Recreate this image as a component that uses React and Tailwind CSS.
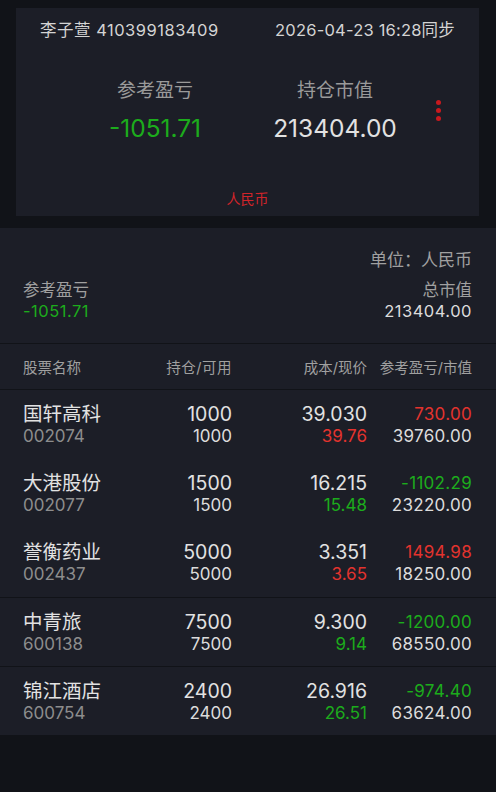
import React from 'react'

const rows = [
  { name: '国轩高科', code: '002074', hold: '1000', avail: '1000', cost: '39.030', price: '39.76', pnl: '730.00', value: '39760.00', up: true },
  { name: '大港股份', code: '002077', hold: '1500', avail: '1500', cost: '16.215', price: '15.48', pnl: '-1102.29', value: '23220.00', up: false },
  { name: '誉衡药业', code: '002437', hold: '5000', avail: '5000', cost: '3.351', price: '3.65', pnl: '1494.98', value: '18250.00', up: true },
  { name: '中青旅', code: '600138', hold: '7500', avail: '7500', cost: '9.300', price: '9.14', pnl: '-1200.00', value: '68550.00', up: false, line: true },
  { name: '锦江酒店', code: '600754', hold: '2400', avail: '2400', cost: '26.916', price: '26.51', pnl: '-974.40', value: '63624.00', up: false, line: true },
]

function Row({ r }) {
  const color = r.up ? 'text-[#e3332e]' : 'text-[#1cac1c]'
  return (
    <div className={`flex h-[69px] pt-3 pl-[23px] ${r.line ? 'border-t border-[#111318]' : ''}`}>
      <div className="w-[110px]">
        <div className="h-6 leading-6 text-[19.5px] text-[#e2e2e2]">{r.name}</div>
        <div className="h-5 leading-5 text-[17px] text-[#8d8d8d]">{r.code}</div>
      </div>
      <div className="w-[99px] text-right">
        <div className="h-6 leading-6 text-[19.5px] text-[#e2e2e2]">{r.hold}</div>
        <div className="h-5 leading-5 text-[17px] text-[#dcdcdc]">{r.avail}</div>
      </div>
      <div className="w-[135px] text-right">
        <div className="h-6 leading-6 text-[19.5px] text-[#e2e2e2]">{r.cost}</div>
        <div className={`h-5 leading-5 text-[17px] ${color}`}>{r.price}</div>
      </div>
      <div className="w-[105px] text-right">
        <div className={`h-6 leading-6 text-[17px] tracking-[0.3px] ${color}`}>{r.pnl}</div>
        <div className="h-5 leading-5 text-[17px] tracking-[0.3px] text-[#dcdcdc]">{r.value}</div>
      </div>
    </div>
  )
}

export default function App() {
  return (
    <div className="min-h-[792px] bg-[#111318] pt-2 pb-14" style={{ fontFamily: 'Inter, "Noto Sans CJK SC", sans-serif' }}>
      {/* account card */}
      <div className="ml-4 mr-[17px] bg-[#1c1e27] pt-[11px] pb-[7px]">
        <div className="flex justify-between px-6 h-[22px] leading-[22px] text-[16.5px] tracking-[0.5px] text-[#d4d4d4]">
          <span>李子萱 410399183409</span>
          <span className="tracking-[0.2px]">2026-04-23 16:28同步</span>
        </div>
        <div className="flex items-center mt-[37px] pl-[49px]">
          <div className="w-[180px] text-center">
            <div className="h-[26px] leading-[26px] text-[19px] text-[#9a9a9a]">参考盈亏</div>
            <div className="mt-[9px] h-[30px] leading-[30px] text-[24.5px] text-[#1cac1c]">-1051.71</div>
          </div>
          <div className="w-[180px] text-center">
            <div className="h-[26px] leading-[26px] text-[19px] text-[#9a9a9a]">持仓市值</div>
            <div className="mt-[9px] h-[30px] leading-[30px] text-[24.5px] text-[#e2e2e2]">213404.00</div>
          </div>
          <div className="ml-[11px] flex flex-col gap-[3px]">
            <span className="w-[5px] h-[5px] rounded-full bg-[#c8191e]" />
            <span className="w-[5px] h-[5px] rounded-full bg-[#c8191e]" />
            <span className="w-[5px] h-[5px] rounded-full bg-[#c8191e]" />
          </div>
        </div>
        <div className="mt-[46px] h-5 leading-5 text-center text-[14px] text-[#d0242a]">人民币</div>
      </div>

      {/* holdings */}
      <div className="mt-3 bg-[#1c1e27]">
        <div className="pl-[23px] pr-6 pt-[21px] pb-[22px] border-b border-[#111318]">
          <div className="h-[22px] leading-[22px] text-right text-[17px] text-[#a0a0a0]">单位：人民币</div>
          <div className="mt-2 flex justify-between">
            <div>
              <div className="h-[22px] leading-[22px] text-[16.5px] text-[#a0a0a0]">参考盈亏</div>
              <div className="h-5 leading-5 text-[16.5px] tracking-[0.5px] text-[#1cac1c]">-1051.71</div>
            </div>
            <div className="text-right">
              <div className="h-[22px] leading-[22px] text-[16.5px] text-[#a0a0a0]">总市值</div>
              <div className="h-5 leading-5 text-[16.5px] tracking-[0.5px] text-[#dcdcdc]">213404.00</div>
            </div>
          </div>
        </div>
        <div className="flex items-center h-[46px] pt-[2px] pl-[23px] border-b border-[#111318] text-[14.5px] text-[#a0a0a0]">
          <div className="w-[110px]">股票名称</div>
          <div className="w-[99px] text-right tracking-[0.5px]">持仓/可用</div>
          <div className="w-[135px] text-right">成本/现价</div>
          <div className="w-[105px] text-right">参考盈亏/市值</div>
        </div>
        {rows.map(r => <Row key={r.code} r={r} />)}
      </div>
    </div>
  )
}
